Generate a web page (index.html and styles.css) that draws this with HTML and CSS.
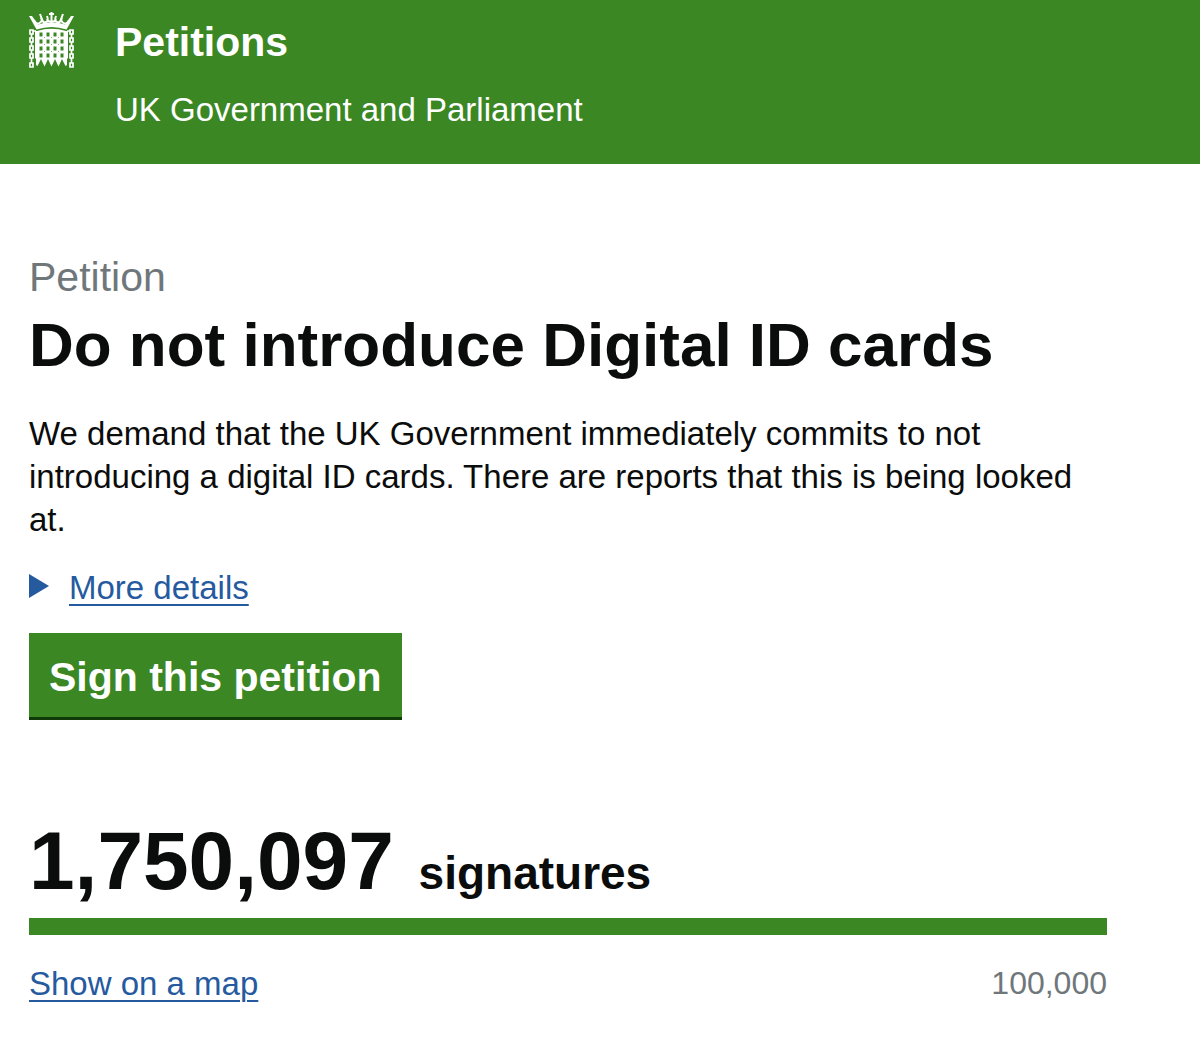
FILE: index.html
```html
<!DOCTYPE html>
<html lang="en">
<head>
	<meta charset="utf-8">
	<meta name="viewport" content="width=device-width, initial-scale=1">
	<title>Do not introduce Digital ID cards - Petitions</title>
	<link rel="stylesheet" href="styles.css">
</head>
<body>
	<!-- Header -->
	<header class="header">
		<svg class="logo" viewBox="0 0 45 56" width="45" height="56" aria-hidden="true">
			<!-- crown -->
			<path fill="#fff" d="M0 4L3 4L9 12.500Q22.500 8 36 12.500L42 4L45 4L37.500 17.500Q22.500 12.500 7.500 17.500Z"/>
			<g fill="none" stroke="#fff" stroke-width="2">
				<path d="M20 2H25M22.500 0V12M11 2L14 10M34 2L31 10"/>
				<path d="M5 8Q7 13 10.500 11T12 6M40 8Q38 13 34.500 11T33 6"/>
				<path d="M13 8Q14 11 17 10T18 4M32 8Q31 11 28 10T27 4M18 7Q19 10 22.500 9.500Q26 10 27 7"/>
			</g>
			<!-- gate -->
			<path fill="#fff" d="M8 19Q22.500 14.500 37 19H39V46L38 47V53L36.500 54L33 47L29.500 54.500L26 47L22.500 54.500L19 47L15.500 54.500L12 47L8.500 54L7 53V47L6 46V19Z"/>
			<g fill="none" stroke="#3b8724">
				<path stroke-width="3" stroke-dasharray="4 3" d="M12 20.500V46M19 20.500V46M26 20.500V46M33 20.500V46"/>
				<path stroke-width="1" stroke-dasharray="1 6" d="M15.500 25V42M22.500 25V42M29.500 25V42" opacity=".6"/>
			</g>
			<!-- chains -->
			<g fill="none" stroke="#fff" stroke-width="1.700">
				<path d="M1 18h3v4h-3zM1 26h3v4h-3zM1 34h3v4h-3zM1 42h3v4h-3zM1 51h3v4h-3z"/>
				<path d="M41 18h3v4h-3zM41 26h3v4h-3zM41 34h3v4h-3zM41 42h3v4h-3zM41 51h3v4h-3z"/>
				<path d="M2.500 22V26M2.500 30V34M2.500 38V42M2.500 46V51M42.500 22V26M42.500 30V34M42.500 38V42M42.500 46V51M4 19H7M38 19H41"/>
			</g>
		</svg>
		<div class="brand">
			<a class="site-name" href="#">Petitions</a>
			<p class="tagline">UK Government and Parliament</p>
		</div>
	</header>

	<!-- Petition -->
	<main class="content">
		<h1><span class="caption">Petition</span> Do not introduce Digital ID cards</h1>
		<p class="action">We demand that the UK Government immediately commits to not introducing a digital ID cards. There are reports that this is being looked at.</p>
		<details>
			<summary><span>More details</span></summary>
		</details>
		<button class="sign" type="button">Sign this petition</button>

		<!-- Signature count -->
		<section class="signatures">
			<p class="count"><span class="number">1,750,097</span> signatures</p>
			<div class="bar"></div>
			<div class="below">
				<a href="#">Show on a map</a>
				<span class="target">100,000</span>
			</div>
		</section>
	</main>
</body>
</html>
```
FILE: styles.css
```css
body {
	margin: 0;
	background: #fff;
	color: #0b0c0c;
	font-family: "Liberation Sans", Arial, sans-serif;
	font-size: 33px;
	line-height: 43px;
}
p, h1 {
	margin: 0;
}
a {
	color: #265a9f;
	text-decoration-thickness: 2px;
	text-underline-offset: 5px;
}

/* Header */
.header {
	display: flex;
	gap: 41px;
	padding: 12px 29px 33px;
	background: #3b8724;
	color: #fff;
}
.logo {
	flex: none;
}
.site-name {
	display: block;
	margin-top: 6px;
	color: #fff;
	font-size: 41px;
	font-weight: bold;
	line-height: 48px;
	text-decoration: none;
}
.tagline {
	margin-top: 22px;
}

/* Petition */
.content {
	padding: 87px 93px 40px 29px;
}
h1 {
	font-size: 62px;
	line-height: 72px;
}
.caption {
	display: block;
	margin-bottom: 6px;
	color: #6f777b;
	font-size: 41px;
	font-weight: normal;
	line-height: 52px;
}
.action {
	margin-top: 31px;
}
details {
	margin-top: 25px;
}
summary {
	display: flex;
	align-items: center;
	width: fit-content;
	color: #265a9f;
	cursor: pointer;
	list-style: none;
}
summary::before {
	content: "";
	margin: 0 20px 4px 0;
	border-left: 20px solid #265a9f;
	border-top: 12px solid transparent;
	border-bottom: 12px solid transparent;
}
summary span {
	text-decoration: underline 2px;
	text-underline-offset: 5px;
}
.sign {
	display: block;
	margin-top: 24px;
	padding: 22px 20px 18px;
	border: 0;
	border-bottom: 3px solid #0f3a08;
	background: #3b8724;
	color: #fff;
	font: bold 41px/44px "Liberation Sans", Arial, sans-serif;
	cursor: pointer;
}

/* Signature count */
.signatures {
	margin-top: 96px;
}
.count {
	font-size: 46px;
	font-weight: bold;
	line-height: 90px;
}
.number {
	margin-right: 12px;
	font-size: 82px;
}
.bar {
	height: 17px;
	background: #3b8724;
}
.below {
	display: flex;
	justify-content: space-between;
	margin-top: 27px;
}
.target {
	color: #6f777b;
	font-size: 32px;
}
```
